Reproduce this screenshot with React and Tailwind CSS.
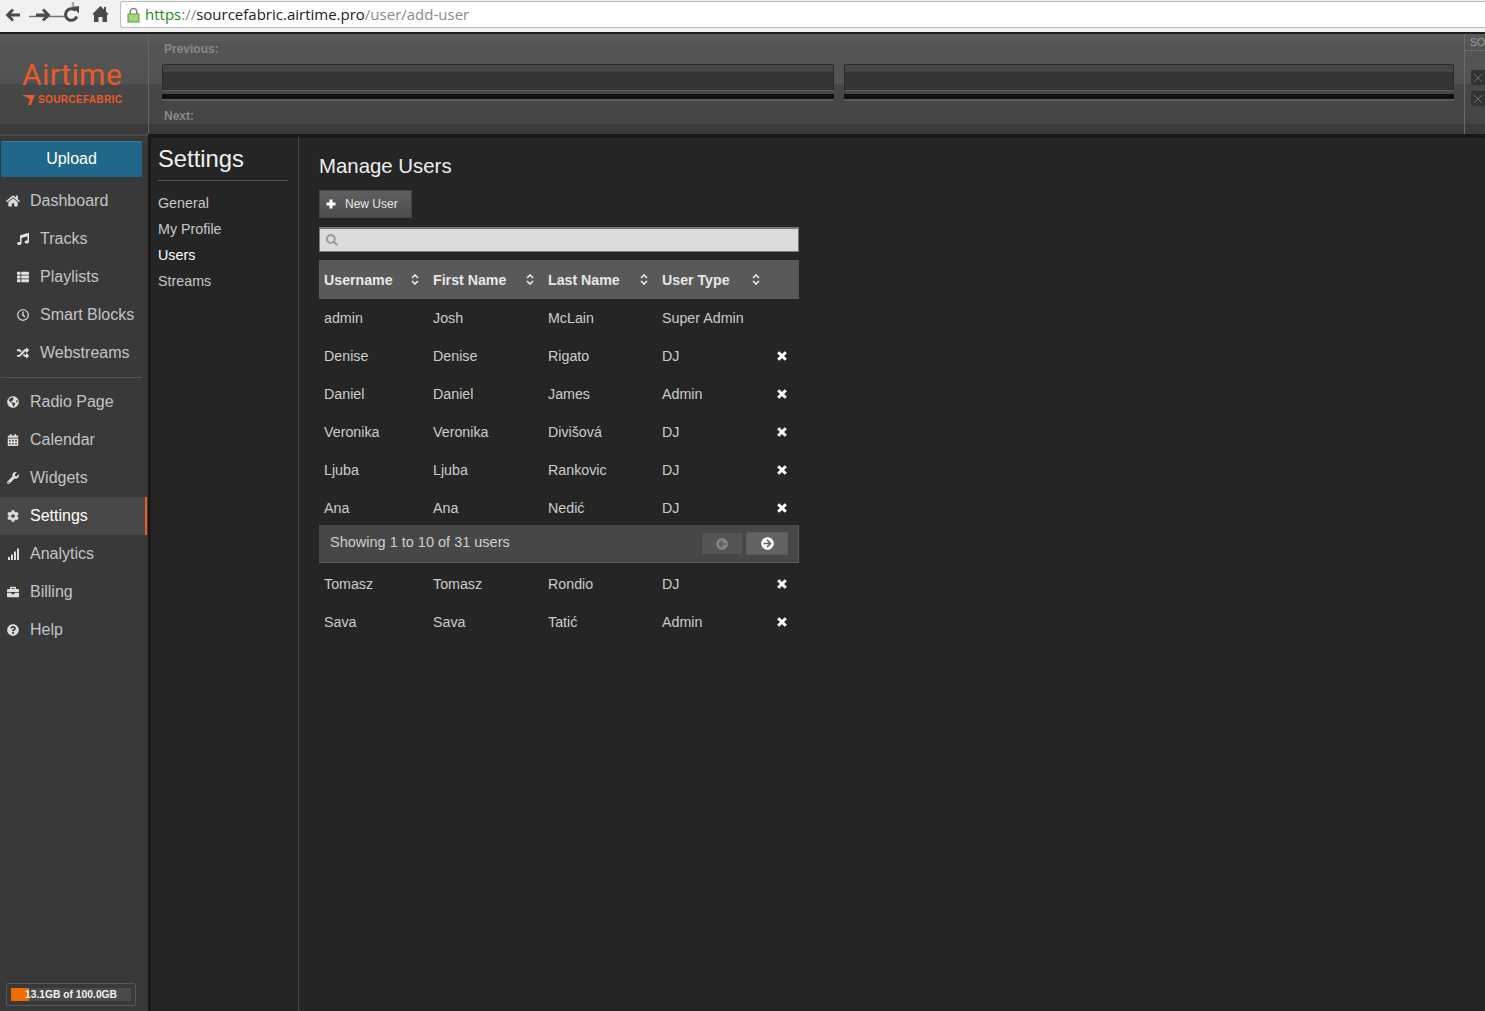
import React from "react";
import {
  FaHome, FaMusic, FaThList, FaRegClock, FaRandom, FaGlobeAmericas, FaCalendarAlt, FaWrench, FaCog,
  FaBriefcase, FaQuestionCircle, FaSearch, FaArrowCircleLeft, FaArrowCircleRight,
} from "react-icons/fa";

function Bars({ className }) {
  return (
    <svg viewBox="0 0 12 12" className={className} fill="currentColor">
      <rect x="1" y="9" width="2" height="3" />
      <rect x="4" y="6.5" width="2" height="5.5" />
      <rect x="7" y="3.5" width="2" height="8.5" />
      <rect x="10" y="0.5" width="2" height="11.5" />
    </svg>
  );
}

const top = [
  { label: "Tracks", Icon: FaMusic },
  { label: "Playlists", Icon: FaThList },
  { label: "Smart Blocks", Icon: FaRegClock },
  { label: "Webstreams", Icon: FaRandom },
];
const bottom = [
  { label: "Radio Page", Icon: FaGlobeAmericas },
  { label: "Calendar", Icon: FaCalendarAlt },
  { label: "Widgets", Icon: FaWrench },
  { label: "Settings", Icon: FaCog, active: true },
  { label: "Analytics", Icon: Bars },
  { label: "Billing", Icon: FaBriefcase },
  { label: "Help", Icon: FaQuestionCircle },
];
const before = [
  ["admin", "Josh", "McLain", "Super Admin", false],
  ["Denise", "Denise", "Rigato", "DJ", true],
  ["Daniel", "Daniel", "James", "Admin", true],
  ["Veronika", "Veronika", "Divišová", "DJ", true],
  ["Ljuba", "Ljuba", "Rankovic", "DJ", true],
  ["Ana", "Ana", "Nedić", "DJ", true],
];
const after = [
  ["Tomasz", "Tomasz", "Rondio", "DJ", true],
  ["Sava", "Sava", "Tatić", "Admin", true],
];
const cols = "grid grid-cols-[109px_115px_114px_112px_30px]";

function Sort() {
  return (
    <svg width="8" height="11" viewBox="0 0 8 11" fill="none" stroke="#ececec" strokeWidth="1.6">
      <path d="M1 4 L4 1 L7 4" />
      <path d="M1 7 L4 10 L7 7" />
    </svg>
  );
}

function Cross() {
  return (
    <svg width="10" height="10" viewBox="0 0 10 10" stroke="#ffffff" strokeWidth="3">
      <path d="M1.2 1.2 L8.8 8.8 M8.8 1.2 L1.2 8.8" />
    </svg>
  );
}

function Row({ r }) {
  return (
    <div className={`${cols} h-[38px] pt-[2px] items-center text-[14.25px] text-[#cccccc]`}>
      <div className="pl-[5px]">{r[0]}</div>
      <div className="pl-[5px]">{r[1]}</div>
      <div className="pl-[5px]">{r[2]}</div>
      <div className="pl-[5px]">{r[3]}</div>
      <div className="flex justify-start pl-[8px] -mt-[2px]">{r[4] && <Cross />}</div>
    </div>
  );
}

function Player() {
  return (
    <div className="flex-1">
      <div className="h-[27px] border border-[#2a2a2a] border-b-[#5e5e5e] rounded-t-[2px] bg-[linear-gradient(#454545_0,#454545_7px,#353535_7px,#353535_100%)]" />
      <div className="mt-[3px] h-[7px] bg-[#111111] border-b-2 border-[#5a5a5a]" />
    </div>
  );
}

function ToolbarIcons() {
  return (
    <svg width="112" height="30" viewBox="0 0 112 30" className="shrink-0" fill="none">
      <path d="M20 15 H8 M13 9.5 L7.5 15 L13 20.5" stroke="#4a4a4a" strokeWidth="2.8" />
      <path d="M29 16.5 H65" stroke="#777777" strokeWidth="1.6" />
      <path d="M36 15 H48 M43 9.5 L48.5 15 L43 20.5" stroke="#4a4a4a" strokeWidth="2.8" />
      <path d="M73 2 V9" stroke="#a8a8a8" strokeWidth="2.5" />
      <path d="M75.5 10.5 A5.8 5.8 0 1 0 76.8 16.5" stroke="#4a4a4a" strokeWidth="3" />
      <path d="M72 7 L79 6 L79 13.5 Z" fill="#4a4a4a" />
      <path d="M100.5 7 L94 13.5 V22 H98.5 V17 H102.5 V22 H107 V13.5 Z" fill="#4a4a4a" />
      <path d="M93 14.5 L100.5 7 L108 14.5" stroke="#4a4a4a" strokeWidth="1.4" />
      <rect x="104" y="7" width="2" height="5" fill="#4a4a4a" />
    </svg>
  );
}

export default function App() {
  return (
    <div className="h-screen overflow-hidden flex flex-col bg-[#252525] font-['Liberation_Sans',Arial,sans-serif]">
      {/* browser toolbar */}
      <div className="h-[34px] shrink-0 flex bg-[#f1f1f1] border-b-2 border-[#1e1e1e]">
        <ToolbarIcons />
        <div className="ml-[8px] mt-[1px] h-[27px] flex-1 flex items-center bg-white border border-r-0 border-[#bdbdbd] rounded-l-[3px] pl-[6px] font-['Open_Sans','Noto_Sans',sans-serif] text-[15px] whitespace-nowrap">
          <svg width="13" height="16" viewBox="0 0 13 16" className="mr-[5px] shrink-0">
            <path d="M3.2 7 V4.8 A3.3 3.3 0 0 1 9.8 4.8 V7" fill="none" stroke="#8a8a8a" strokeWidth="1.6" />
            <rect x="1" y="7" width="11" height="8" fill="#a5d67c" stroke="#5f9c3c" />
          </svg>
          <span className="text-[#1a8a1a]">https</span>
          <span className="text-[#8a8a8a]">://</span>
          <span className="text-[#222222]">sourcefabric.airtime.pro</span>
          <span className="text-[#8a8a8a]">/user/add-user</span>
        </div>
      </div>

      {/* header */}
      <div className="h-[100px] shrink-0 flex bg-[linear-gradient(#5a5a5a_0,#5a5a5a_7px,#555555_7px,#525252_50px,#474747_50px,#454545_90px,#3a3a3a_90px,#3a3a3a_100%)]">
        <div className="w-[149px] shrink-0 border-r border-[#666666] pl-[22px] pt-[26px]">
          <div className="text-[30px] leading-[30px] text-[#ec5a28] font-['Roboto','Open_Sans',sans-serif] font-normal tracking-[0.45px]">Airtime</div>
          <div className="flex items-center mt-[4px] gap-[2px]">
            <svg width="14" height="12" viewBox="0 0 14 12"><path d="M0 1 H13 L9 11 L6 11 L8 5 Z" fill="#ec5a28" /></svg>
            <span className="text-[10px] leading-[12px] font-bold text-[#ec5a28] tracking-[0.35px]">SOURCEFABRIC</span>
          </div>
        </div>
        <div className="flex-1 min-w-0 flex flex-col pl-[13px] pr-[10px]">
          <div className="pl-[2px] pt-[6px] h-[30px] text-[12px] font-bold text-[#888888]">Previous:</div>
          <div className="flex gap-[10px]">
            <Player />
            <div className="w-[610px]"><Player /></div>
          </div>
          <div className="pl-[2px] pt-[6px] text-[12px] font-bold text-[#888888]">Next:</div>
        </div>
        <div className="w-[21px] shrink-0 border-l border-[#6a6a6a] overflow-hidden">
          <div className="h-[17px] pl-[5px] border-b border-[#6a6a6a] text-[10.5px] leading-[17px] text-[#9a9a9a] whitespace-nowrap">SO</div>
          <div className="mt-[19px] ml-[6px] flex flex-col gap-[6px]">
            {[0, 1].map((i) => (
              <div key={i} className="w-[20px] h-[15px] bg-[#333333] rounded-[2px] pl-[2px] flex items-center">
                <svg width="10" height="10" viewBox="0 0 10 10" stroke="#6e6e6e" strokeWidth="1"><path d="M1 1 L9 9 M9 1 L1 9" /></svg>
              </div>
            ))}
          </div>
        </div>
      </div>

      {/* body */}
      <div className="flex-1 min-h-0 flex">
        {/* sidebar */}
        <div className="w-[148px] shrink-0 bg-[#393939] border-t-2 border-[#4a4a4a] flex flex-col text-[16px] text-[#c4c4c4]">
          <div className="mt-[5px] ml-[1px] w-[141px] h-[36px] pb-[2px] rounded-[2px] bg-[#20688a] border-t border-[#2f7c9f] flex items-center justify-center text-white shrink-0">Upload</div>
          <div className="mt-[5px] h-[38px] flex items-center pl-[6px] shrink-0">
            <FaHome className="w-[14px] h-[14px] text-[#dddddd] mr-[10px]" />Dashboard
          </div>
          {top.map(({ label, Icon }) => (
            <div key={label} className="h-[38px] flex items-center pl-[17px] shrink-0">
              <Icon className="w-[12px] h-[12px] text-[#e4e4e4] mr-[11px]" />{label}
            </div>
          ))}
          <div className="mt-[5px] ml-[1px] w-[141px] h-[1px] bg-[#555555] shrink-0" />
          <div className="mt-[5px]">
            {bottom.map(({ label, Icon, active }) => (
              <div key={label} className={`h-[38px] flex items-center pl-[7px] ${active ? "bg-[#484848] text-white border-r-2 border-[#f15a24] mr-[1px]" : ""}`}>
                <Icon className="w-[12px] h-[12px] text-[#dddddd] mr-[11px]" />{label}
              </div>
            ))}
          </div>
          <div className="mt-auto mb-[5px] ml-[6px] w-[130px] h-[23px] border border-[#585858] rounded-[2px] p-[4px]">
            <div className="relative h-[13px] bg-[#4a4a4a]">
              <div className="h-full w-[18px] bg-[#ef6c00]" />
              <div className="absolute inset-0 flex items-center justify-center text-[10.3px] font-bold text-[#f2f2f2] whitespace-nowrap">13.1GB of 100.0GB</div>
            </div>
          </div>
        </div>

        {/* sub nav */}
        <div className="w-[151px] shrink-0 border-l-[3px] border-l-[#181818] border-r border-r-[#474747] border-t-4 border-t-[#181818] pl-[7px] pr-[10px]">
          <div className="h-[43px] pt-[4px] text-[23.8px] leading-[34px] text-[#f0f0f0] border-b border-[#555555]">Settings</div>
          <div className="mt-[9px] text-[14.3px] text-[#c8c8c8]">
            <div className="h-[26px] leading-[26px]">General</div>
            <div className="h-[26px] leading-[26px]">My Profile</div>
            <div className="h-[26px] leading-[26px] text-white">Users</div>
            <div className="h-[26px] leading-[26px]">Streams</div>
          </div>
        </div>

        {/* main */}
        <div className="flex-1 min-w-0 border-t-4 border-[#181818] pl-[20px]">
          <div className="w-[480px]">
            <h1 className="pt-[14px] h-[52px] text-[20.4px] leading-[28px] text-[#eeeeee]">Manage Users</h1>
            <div className="w-[93px] h-[28px] flex items-center pl-[6px] bg-[linear-gradient(#5f5f5f,#4c4c4c)] border border-[#444444] text-[12px] text-[#e8e8e8]">
              <svg width="10" height="10" viewBox="0 0 10 10" stroke="#ffffff" strokeWidth="3" className="mr-[9px]"><path d="M5 0.5 V9.5 M0.5 5 H9.5" /></svg>
              New User
            </div>
            <div className="mt-[9px] h-[25px] flex items-center pl-[6px] bg-[#dcdcdc] border border-[#777777] border-t-2">
              <FaSearch className="w-[12px] h-[12px] text-[#9a9a9a]" />
            </div>
            <div className={`${cols} mt-[8px] h-[39px] pt-[3px] items-center bg-[#595959] text-[14.2px] font-bold text-[#e8e8e8]`}>
              {["Username", "First Name", "Last Name", "User Type"].map((h) => (
                <div key={h} className="flex items-center justify-between pl-[5px] pr-[9px]">
                  <span>{h}</span>
                  <span className="-mt-[3px] flex"><Sort /></span>
                </div>
              ))}
              <div />
            </div>
            {before.map((r) => <Row key={r[0]} r={r} />)}
            <div className="-mt-[2px] mb-[2px] relative h-[38px] flex items-center justify-between pl-[11px] pr-[10px] pb-[2px] bg-[#474747] border-r border-b border-[#5a5a5a] text-[14.5px] text-[#cfcfcf]">
              <span>Showing 1 to 10 of 31 users</span>
              <div className="flex items-center gap-[4px] mt-[2px]">
                <div className="w-[40px] h-[21px] bg-[#555555] flex items-center justify-center">
                  <FaArrowCircleLeft className="w-[12px] h-[12px] text-[#858585]" />
                </div>
                <div className="w-[42px] h-[23px] bg-[#636363] border border-[#5a5a5a] flex items-center justify-center">
                  <FaArrowCircleRight className="w-[13px] h-[13px] text-white" />
                </div>
              </div>
            </div>
            {after.map((r) => <Row key={r[0]} r={r} />)}
          </div>
        </div>
      </div>
    </div>
  );
}
